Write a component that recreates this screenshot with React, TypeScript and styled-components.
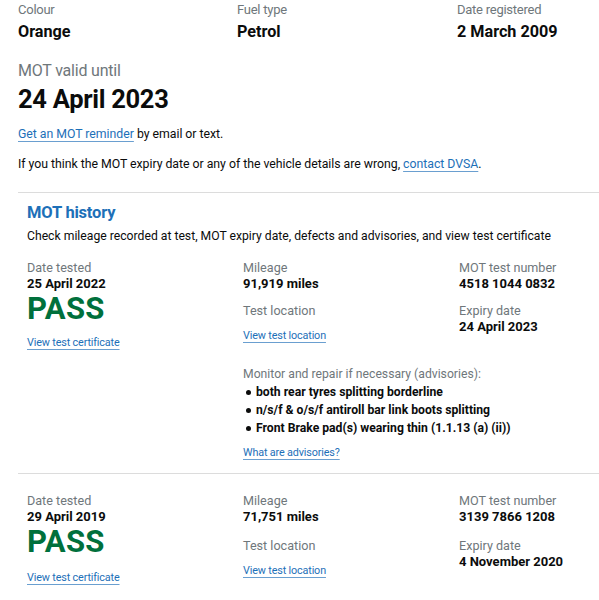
import styled, { createGlobalStyle } from "styled-components";

const GlobalStyle = createGlobalStyle`
  html, body {
    margin: 0;
    padding: 0;
    background: #ffffff;
    overflow-x: hidden;
  }
  body {
    font-family: Roboto, "Liberation Sans", Arial, sans-serif;
    color: #0b0c0c;
  }
`;

const Page = styled.main`
  padding: 0 0 0 18px;
  width: 700px;
`;

const Summary = styled.div`
  display: grid;
  grid-template-columns: 219px 220px 1fr;
`;

const SummaryLabel = styled.div`
  font-size: 13px;
  line-height: 20px;
  letter-spacing: -0.25px;
  color: #6f777b;
`;

const SummaryValue = styled.div`
  font-size: 16.2px;
  line-height: 22px;
  font-weight: 700;
  margin-top: 1px;
`;

const ValidLabel = styled.div`
  margin-top: 16px;
  font-size: 16px;
  line-height: 24px;
  letter-spacing: -0.2px;
  color: #6f777b;
`;

const ValidValue = styled.div`
  font-size: 25.5px;
  line-height: 32px;
  font-weight: 700;
  letter-spacing: -0.3px;
`;

const Para = styled.p<{ $top: number }>`
  margin: ${(p) => p.$top}px 0 0;
  font-size: 12.3px;
  line-height: 20px;
  letter-spacing: -0.03px;
`;

const Link = styled.a`
  color: #1d70b8;
  text-decoration: underline;
  text-decoration-color: #6a9fd0;
  text-decoration-thickness: 1px;
  text-underline-offset: 3px;
  cursor: pointer;
`;

const History = styled.section`
  margin-top: 18px;
  border-top: 1px solid #dcdcdc;
`;

const HistoryHead = styled.div`
  padding: 8px 9px 0;
`;

const HistoryTitle = styled.h2`
  margin: 0;
  font-size: 16.5px;
  line-height: 24px;
  font-weight: 700;
  color: #1d70b8;
  letter-spacing: -0.2px;
`;

const HistoryIntro = styled.p`
  margin: 1px 0 0;
  font-size: 12.2px;
  line-height: 20px;
`;

const Record = styled.div<{ $top: number; $last?: boolean }>`
  display: grid;
  grid-template-columns: 216px 216px 1fr;
  padding: ${(p) => p.$top}px 9px 12px 9px;
  border-bottom: ${(p) => (p.$last ? "none" : "1px solid #dcdcdc")};
`;

const Column = styled.div``;

const Label = styled.div<{ $top?: number }>`
  margin-top: ${(p) => p.$top ?? 0}px;
  font-size: 12.6px;
  line-height: 16px;
  color: #6f777b;
`;

const Value = styled.div`
  font-size: 13px;
  line-height: 16px;
  font-weight: 700;
`;

const Result = styled.div`
  font-size: 31px;
  line-height: 33px;
  font-weight: 700;
  color: #00703c;
  letter-spacing: 0.3px;
`;

const LinkLine = styled.div<{ $top: number }>`
  margin-top: ${(p) => p.$top}px;
  font-size: 10.8px;
  line-height: 16px;
  letter-spacing: -0.15px;
`;

const Advisories = styled.div`
  grid-column: 2 / 4;
  margin-top: 14px;
`;

const AdvisoryLabel = styled.div`
  font-size: 12.2px;
  line-height: 18px;
  color: #6f777b;
`;

const AdvisoryList = styled.ul`
  margin: 0;
  padding: 0;
  list-style: none;
`;

const AdvisoryItem = styled.li`
  position: relative;
  padding-left: 13px;
  font-size: 12.2px;
  line-height: 18px;
  font-weight: 700;

  &::before {
    content: "";
    position: absolute;
    left: 3px;
    top: 7px;
    width: 5px;
    height: 5px;
    border-radius: 50%;
    background: #0b0c0c;
  }
`;

type MotTest = {
  date: string;
  result: string;
  mileage: string;
  number: string;
  expiry: string;
  advisories?: string[];
};

const tests: MotTest[] = [
  {
    date: "25 April 2022",
    result: "PASS",
    mileage: "91,919 miles",
    number: "4518 1044 0832",
    expiry: "24 April 2023",
    advisories: [
      "both rear tyres splitting borderline",
      "n/s/f & o/s/f antiroll bar link boots splitting",
      "Front Brake pad(s) wearing thin (1.1.13 (a) (ii))",
    ],
  },
  {
    date: "29 April 2019",
    result: "PASS",
    mileage: "71,751 miles",
    number: "3139 7866 1208",
    expiry: "4 November 2020",
  },
];

function TestRecord({ test, first, last }: { test: MotTest; first: boolean; last: boolean }) {
  return (
    <Record $top={first ? 14 : 19} $last={last}>
      <Column>
        <Label>Date tested</Label>
        <Value>{test.date}</Value>
        <Result>{test.result}</Result>
        <LinkLine $top={first ? 10 : 12}>
          <Link>View test certificate</Link>
        </LinkLine>
      </Column>
      <Column>
        <Label>Mileage</Label>
        <Value>{test.mileage}</Value>
        <Label $top={first ? 11 : 13}>Test location</Label>
        <LinkLine $top={9}>
          <Link>View test location</Link>
        </LinkLine>
      </Column>
      <Column>
        <Label>MOT test number</Label>
        <Value>{test.number}</Value>
        <Label $top={first ? 11 : 13}>Expiry date</Label>
        <Value>{test.expiry}</Value>
      </Column>
      {test.advisories ? (
        <Advisories>
          <AdvisoryLabel>Monitor and repair if necessary (advisories):</AdvisoryLabel>
          <AdvisoryList>
            {test.advisories.map((a) => (
              <AdvisoryItem key={a}>{a}</AdvisoryItem>
            ))}
          </AdvisoryList>
          <LinkLine $top={8}>
            <Link>What are advisories?</Link>
          </LinkLine>
        </Advisories>
      ) : null}
    </Record>
  );
}

export default function App() {
  return (
    <>
      <GlobalStyle />
      <Page>
        <Summary>
          <div>
            <SummaryLabel>Colour</SummaryLabel>
            <SummaryValue>Orange</SummaryValue>
          </div>
          <div>
            <SummaryLabel>Fuel type</SummaryLabel>
            <SummaryValue>Petrol</SummaryValue>
          </div>
          <div>
            <SummaryLabel>Date registered</SummaryLabel>
            <SummaryValue>2 March 2009</SummaryValue>
          </div>
        </Summary>
        <ValidLabel>MOT valid until</ValidLabel>
        <ValidValue>24 April 2023</ValidValue>
        <Para $top={9}>
          <Link>Get an MOT reminder</Link> by email or text.
        </Para>
        <Para $top={10}>
          If you think the MOT expiry date or any of the vehicle details are wrong,{" "}
          <Link>contact DVSA</Link>.
        </Para>
        <History>
          <HistoryHead>
            <HistoryTitle>MOT history</HistoryTitle>
            <HistoryIntro>
              Check mileage recorded at test, MOT expiry date, defects and advisories, and view
              test certificate
            </HistoryIntro>
          </HistoryHead>
          {tests.map((t, i) => (
            <TestRecord key={t.number} test={t} first={i === 0} last={i === tests.length - 1} />
          ))}
        </History>
      </Page>
    </>
  );
}
